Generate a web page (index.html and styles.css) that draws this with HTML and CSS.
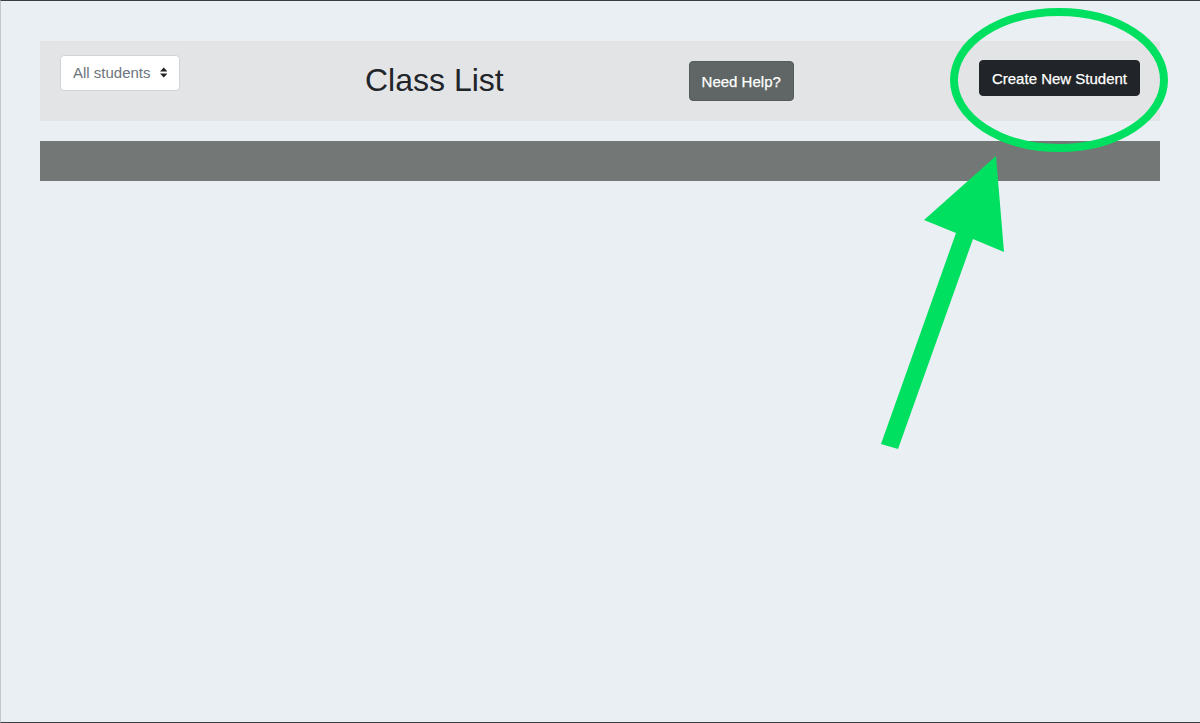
FILE: index.html
```html
<!DOCTYPE html>
<html>
<head>
<meta charset="utf-8">
<link rel="stylesheet" href="styles.css">
</head>
<body>
<div class="frame">
  <div class="header">
    <div class="select">
      <span>All students</span>
      <svg class="carets" width="8" height="11" viewBox="0 0 8 11"><path d="M4 0 L8 4.5 L0 4.5 Z M4 11 L8 6.5 L0 6.5 Z" fill="#222"/></svg>
    </div>
    <h1 class="title">Class List</h1>
    <button class="btn btn-help">Need Help?</button>
    <button class="btn btn-create">Create New Student</button>
  </div>
  <div class="bar"></div>
  <svg class="annot" width="1200" height="723" viewBox="0 0 1200 723">
    <ellipse cx="1058" cy="80" rx="105" ry="68" fill="none" stroke="#00e060" stroke-width="8"/>
    <polygon points="995,156 1003,252 972,239 897,449 880,444 955,233 923,220" fill="#00e060"/>
  </svg>
</div>
</body>
</html>
```
FILE: styles.css
```css
html, body {
  margin: 0;
  padding: 0;
}
body {
  font-family: "Liberation Sans", Arial, sans-serif;
  background: #e9eff2;
}
.frame {
  position: relative;
  box-sizing: border-box;
  width: 1200px;
  height: 723px;
  border-top: 1px solid #3a3f43;
  border-bottom: 1px solid #3a3f43;
  border-left: 1px solid #c3c7ca;
  padding: 40px 40px 0 39px;
  background: #e9eff2;
  overflow: hidden;
}
.header {
  height: 80px;
  background: #e3e4e6;
  display: flex;
  align-items: center;
  padding: 0 20px;
}
.header > * {
  flex-shrink: 0;
}
.select {
  align-self: flex-start;
  margin-top: 14px;
  box-sizing: border-box;
  height: 36px;
  width: 120px;
  display: flex;
  align-items: center;
  padding: 0 12px 2px;
  background: #fff;
  border: 1px solid #ced4da;
  border-radius: 4px;
  color: #6c757d;
  font-size: 15px;
  white-space: nowrap;
}
.carets {
  margin-left: 9px;
  margin-top: 1px;
}
.title {
  margin: 0 0 2px 185px;
  font-size: 32px;
  font-weight: normal;
  line-height: 38px;
  color: #212529;
  white-space: nowrap;
}
.btn {
  font-family: "Liberation Sans", Arial, sans-serif;
  font-size: 15px;
  color: #fff;
  border-radius: 4px;
  cursor: pointer;
  white-space: nowrap;
  -webkit-text-stroke: 0.25px #fff;
}
.btn-help {
  margin-left: 185px;
  height: 40px;
  width: 105px;
  padding: 0;
  background: #5f6665;
  border: 1px solid #545b5a;
}
.btn-create {
  margin-left: auto;
  height: 36px;
  width: 161px;
  padding: 0;
  background: #212529;
  border: 1px solid #212529;
  align-self: flex-start;
  margin-top: 19px;
}
.bar {
  margin-top: 20px;
  height: 40px;
  background: #737776;
}
.annot {
  position: absolute;
  left: 0;
  top: -1px;
  pointer-events: none;
}
```
